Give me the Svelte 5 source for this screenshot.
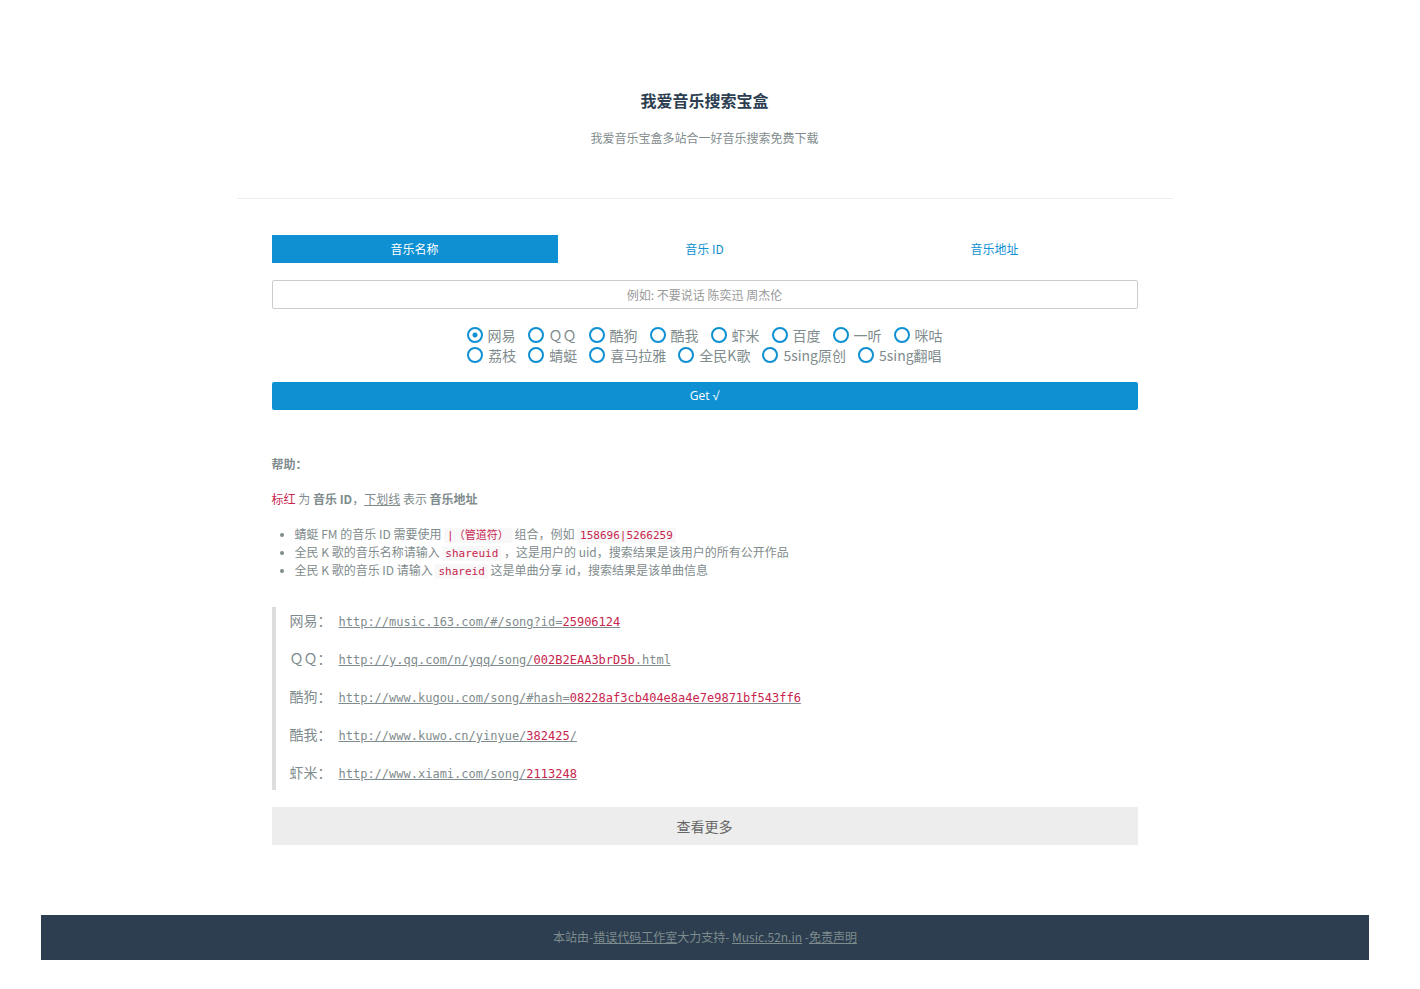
<script>
  const tabs = ['音乐名称', '音乐 ID', '音乐地址'];
  const rows = [
    ['网易', 'ＱＱ', '酷狗', '酷我', '虾米', '百度', '一听', '咪咕'],
    ['荔枝', '蜻蜓', '喜马拉雅', '全民K歌', '5sing原创', '5sing翻唱'],
  ];
  const examples = [
    { site: '网易：', before: 'http://music.163.com/#/song?id=', id: '25906124', after: '' },
    { site: 'ＱＱ：', before: 'http://y.qq.com/n/yqq/song/', id: '002B2EAA3brD5b', after: '.html' },
    { site: '酷狗：', before: 'http://www.kugou.com/song/#hash=', id: '08228af3cb404e8a4e7e9871bf543ff6', after: '' },
    { site: '酷我：', before: 'http://www.kuwo.cn/yinyue/', id: '382425', after: '/' },
    { site: '虾米：', before: 'http://www.xiami.com/song/', id: '2113248', after: '' },
  ];
  let active = $state(0);
  let source = $state('网易');
</script>

<div class="page">
  <main>
    <header>
      <h1>我爱音乐搜索宝盒</h1>
      <p>我爱音乐宝盒多站合一好音乐搜索免费下载</p>
    </header>
    <div class="content">
      <form onsubmit={(e) => e.preventDefault()}>
        <nav>
          {#each tabs as tab, i}
            <button type="button" class:active={active === i} onclick={() => (active = i)}>{tab}</button>
          {/each}
        </nav>
        <input class="query" type="text" aria-label="音乐名称" placeholder="例如: 不要说话 陈奕迅 周杰伦" />
        <div class="sources">
          {#each rows as row}
            <div class="row">
              {#each row as name}
                <label><input type="radio" name="source" value={name} bind:group={source} /><span>{name}</span></label>
              {/each}
            </div>
          {/each}
        </div>
        <button class="submit" type="submit">Get √</button>
      </form>

      <section class="help">
        <p><b>帮助：</b></p>
        <p><span class="red">标红</span> 为 <b>音乐 ID</b>，<u>下划线</u> 表示 <b>音乐地址</b></p>
        <ul>
          <li>蜻蜓 FM 的音乐 ID 需要使用 <code>|（管道符）</code> 组合，例如 <code>158696|5266259</code></li>
          <li>全民 K 歌的音乐名称请输入 <code>shareuid</code> ，这是用户的 uid，搜索结果是该用户的所有公开作品</li>
          <li>全民 K 歌的音乐 ID 请输入 <code>shareid</code> 这是单曲分享 id，搜索结果是该单曲信息</li>
        </ul>
      </section>

      <div class="examples">
        {#each examples as ex}
          <div class="example">
            <span>{ex.site}</span>
            <u>{ex.before}<span class="red">{ex.id}</span>{ex.after}</u>
          </div>
        {/each}
      </div>
      <button class="more" type="button">查看更多</button>
    </div>
  </main>
  <footer>
    <p>本站由-<a href="#studio">错误代码工作室</a>大力支持- <a href="#home">Music.52n.in</a> -<a href="#terms">免责声明</a></p>
  </footer>
</div>

<style>
  :global(body) {
    background: #fff;
  }
  .page {
    padding: 88px 52px 29px 41px;
    font: 12px/18px 'Noto Sans CJK SC', sans-serif;
    color: #7f8c8d;
  }
  main {
    max-width: 936px;
    margin: 0 auto;
  }
  header {
    padding-bottom: 51px;
    border-bottom: 1px solid #eee;
    text-align: center;
  }
  h1 {
    margin: 0 0 17px;
    font-size: 16px;
    line-height: 24px;
    font-weight: 700;
    color: #2c3e50;
  }
  p {
    margin: 0;
  }
  .content {
    padding: 36px 35px 70px;
  }
  button {
    border: 0;
    font: inherit;
    cursor: pointer;
  }
  nav {
    display: grid;
    grid-template-columns: 286px 1fr 286px;
    margin-bottom: 17px;
  }
  nav button {
    height: 28px;
    padding: 0;
    background: none;
    color: #0e90d2;
  }
  nav button.active {
    background: #0e90d2;
    color: #fff;
  }
  .query {
    display: block;
    box-sizing: border-box;
    width: 100%;
    height: 29px;
    border: 1px solid #ccc;
    border-radius: 2px;
    text-align: center;
    font: inherit;
    color: #555;
  }
  .query::placeholder {
    color: #999;
  }
  .sources {
    margin: 16px 0 17px;
    font-size: 14px;
    line-height: 20px;
  }
  .row {
    display: flex;
    justify-content: center;
    gap: 12px;
  }
  label {
    display: flex;
    align-items: center;
    gap: 5px;
  }
  input[type='radio'] {
    appearance: none;
    box-sizing: border-box;
    width: 16px;
    height: 16px;
    margin: 0;
    border: 2px solid #0e90d2;
    border-radius: 50%;
  }
  input[type='radio']:checked {
    background: radial-gradient(circle, #0e90d2 2px, transparent 3px);
  }
  .submit {
    width: 100%;
    height: 28px;
    border-radius: 2px;
    background: #0e90d2;
    color: #fff;
    font-family: 'Open Sans', sans-serif;
  }
  .help {
    margin-top: 45px;
  }
  .help p {
    margin-bottom: 17px;
  }
  ul {
    margin: 0;
    padding-left: 23px;
  }
  li {
    height: 18px;
  }
  li::marker {
    font-family: 'Open Sans', sans-serif;
  }
  code {
    padding: 1px 3px;
    background: #f8f8f8;
    color: #c7254e;
    font: 11px/12px 'DejaVu Sans Mono', 'Noto Sans CJK SC', monospace;
  }
  .red {
    color: #c7254e;
  }
  .examples {
    display: grid;
    gap: 18px;
    margin: 28px 0 17px;
    padding: 3px 0 8px 14px;
    border-left: 4px solid #ddd;
    font-size: 14px;
    line-height: 20px;
  }
  .example {
    display: grid;
    grid-template-columns: 49px 1fr;
    align-items: baseline;
    height: 20px;
  }
  .example u {
    font-family: 'DejaVu Sans Mono', monospace;
    font-size: 12px;
  }
  .more {
    width: 100%;
    height: 38px;
    background: #ededed;
    color: #666;
    font-size: 14px;
  }
  footer {
    margin-right: -1px;
    padding: 13px 0 14px;
    background: #2c3e50;
    text-align: center;
  }
  a {
    color: inherit;
  }
</style>
